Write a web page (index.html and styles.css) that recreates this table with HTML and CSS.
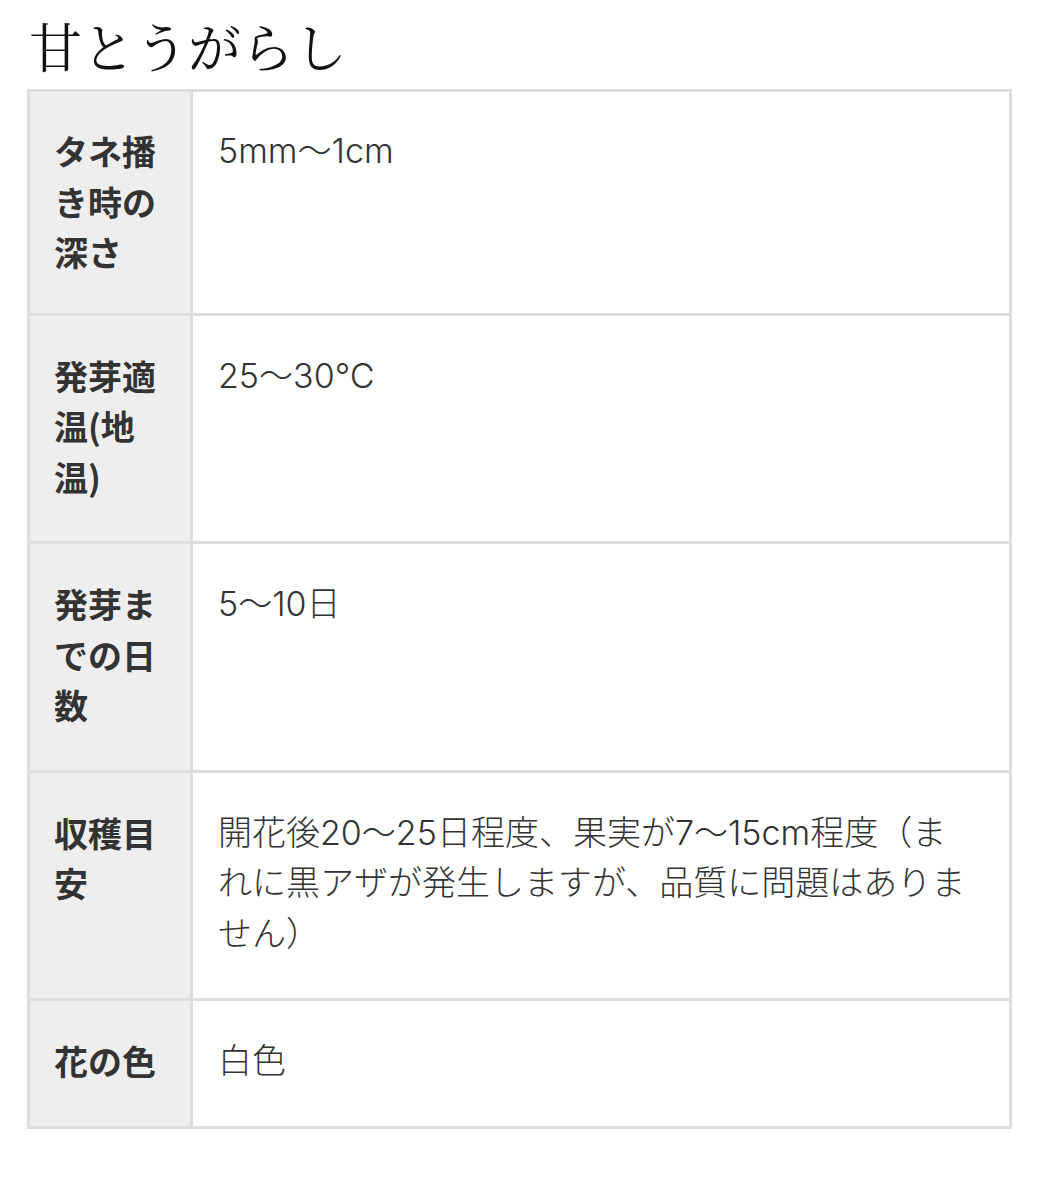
FILE: index.html
```html
<!DOCTYPE html>
<html lang="ja">
<head>
<meta charset="utf-8">
<title>甘とうがらし</title>
<link rel="stylesheet" href="styles.css">
</head>
<body>
<div class="page">
  <h2 class="title">甘とうがらし</h2>
  <table class="spec">
    <tbody>
      <tr>
        <th>タネ播き時の深さ</th>
        <td>5mm〜1cm</td>
      </tr>
      <tr>
        <th>発芽適温(地温)</th>
        <td>25〜30℃</td>
      </tr>
      <tr>
        <th>発芽までの日数</th>
        <td>5〜10日</td>
      </tr>
      <tr>
        <th>収穫目安</th>
        <td>開花後20〜25日程度、果実が7〜15cm程度（まれに黒アザが発生しますが、品質に問題はありません）</td>
      </tr>
      <tr>
        <th>花の色</th>
        <td>白色</td>
      </tr>
    </tbody>
  </table>
</div>
</body>
</html>
```
FILE: styles.css
```css
html, body {
  margin: 0;
  padding: 0;
  background: #ffffff;
}

.page {
  padding: 9px 27px 40px 27px;
  font-family: "Inter", "Noto Sans CJK JP", sans-serif;
  color: #333333;
}

.title {
  margin: 0 0 8px 2px;
  font-family: "Noto Serif CJK JP", "Noto Sans CJK JP", serif;
  font-weight: 400;
  font-size: 53px;
  line-height: 72px;
  color: #111111;
}

.spec {
  width: 100%;
  border-collapse: collapse;
  table-layout: fixed;
  border: 3px solid #dddddd;
}

.spec th,
.spec td {
  border: 3px solid #dddddd;
  vertical-align: top;
  font-size: 34px;
  line-height: 50.5px;
  padding: 35px 25px 39px 25px;
  text-align: left;
}

.spec tr:first-child th,
.spec tr:first-child td {
  padding-top: 34px;
  padding-bottom: 35px;
}

.spec th {
  width: 108px;
  padding-left: 24px;
  padding-right: 28px;
  background: #eeeeee;
  font-family: "Noto Sans CJK JP", sans-serif;
  font-weight: bold;
  color: #333333;
}

.spec td {
  padding-right: 34px;
  background: #ffffff;
  font-weight: 300;
  color: #333333;
}
```
